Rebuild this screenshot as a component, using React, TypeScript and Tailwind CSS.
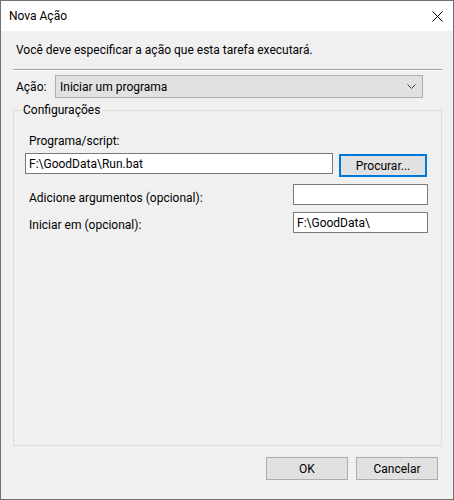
import React from 'react';

const font = { fontFamily: 'Roboto, "Noto Sans", sans-serif' };

const TextBox = ({ value, className = '' }: { value?: string; className?: string }) => (
  <div className={`flex h-[21px] items-center border border-[#7a7a7a] bg-white pl-[3px] text-[12px] text-black ${className}`}>
    {value}
  </div>
);

const Btn = ({ label, className = '' }: { label: string; className?: string }) => (
  <div className={`flex h-[23px] items-center justify-center border bg-[#e1e1e1] text-[12px] text-black ${className}`}>
    {label}
  </div>
);

export default function App() {
  return (
    <div style={font} className="flex h-[500px] w-[454px] flex-col border border-[#707070] bg-[#f0f0f0] text-[12px] leading-[16px] text-black">
      {/* Title bar */}
      <div className="flex h-[30px] shrink-0 items-center justify-between bg-white pl-[8px] pr-[10px]">
        <span>Nova Ação</span>
        <svg width="11" height="11" viewBox="0 0 11 11" className="mt-[1px]">
          <path d="M0.5 0.5 L10.5 10.5 M10.5 0.5 L0.5 10.5" stroke="#000" strokeWidth="1" fill="none" />
        </svg>
      </div>

      {/* Body */}
      <div className="flex flex-1 flex-col pl-[12px] pr-[11px]">
        <p className="mt-[11px] pl-[3px]">Você deve especificar a ação que esta tarefa executará.</p>
        <div className="mt-[11px] h-px bg-[#a0a0a0]" />
        <div className="h-px bg-white" />

        {/* Ação */}
        <div className="mt-[4px] flex items-center">
          <span className="w-[42px] pl-[3px]">Ação:</span>
          <div className="flex h-[23px] w-[368px] items-center justify-between border border-[#adadad] bg-[#e1e1e1] pl-[4px] pr-[6px]">
            <span>Iniciar um programa</span>
            <svg width="9" height="5" viewBox="0 0 9 5">
              <polyline points="0.5,0.5 4.5,4.5 8.5,0.5" stroke="#404040" strokeWidth="1" fill="none" />
            </svg>
          </div>
        </div>

        {/* Configurações group */}
        <div className="relative mt-[12px] flex-1 border border-[#dcdcdc] pl-[11px] pr-[13px]">
          <span className="absolute left-[7px] top-[-9px] bg-[#f0f0f0] px-[2px]">Configurações</span>

          <p className="mt-[22px] pl-[4px]">Programa/script:</p>
          <div className="mt-[4px] flex items-start">
            <TextBox value="F:\GoodData\Run.bat" className="w-[308px]" />
            <Btn label="Procurar..." className="ml-[6px] mt-[1px] w-[88px] border-2 border-[#0078d7]" />
          </div>

          <div className="mt-[7px] flex items-start justify-between">
            <span className="mt-[6px] pl-[4px]">Adicione argumentos (opcional):</span>
            <TextBox className="w-[135px]" />
          </div>

          <div className="mt-[6px] flex items-start justify-between">
            <span className="mt-[5px] pl-[4px]">Iniciar em (opcional):</span>
            <TextBox value="F:\GoodData\" className="w-[135px]" />
          </div>
        </div>

        {/* Footer buttons */}
        <div className="mb-[19px] mt-[11px] flex justify-end gap-[8px] pr-[4px]">
          <Btn label="OK" className="w-[82px] border-[#adadad]" />
          <Btn label="Cancelar" className="w-[82px] border-[#adadad]" />
        </div>
      </div>
    </div>
  );
}
